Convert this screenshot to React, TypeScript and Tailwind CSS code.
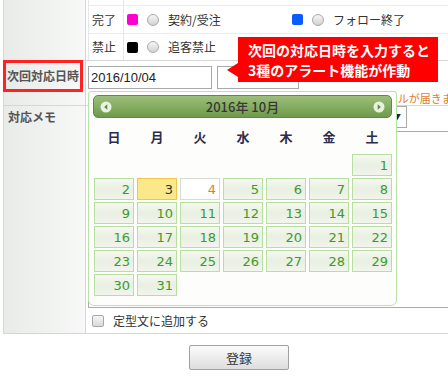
import React from "react";

const jp = { fontFamily: '"Noto Sans CJK JP", "Noto Sans", sans-serif' };
const days = ["日", "月", "火", "水", "木", "金", "土"];

type Cell = number | null;
const cells: Cell[] = [null, null, null, null, null, null, ...Array.from({ length: 31 }, (_, i) => i + 1)];

function Radio() {
  return (
    <span className="inline-block w-[12px] h-[12px] rounded-full border border-[#a9a9a9] bg-gradient-to-b from-[#f6f6f6] to-[#d2d2d2]" />
  );
}

function Status({ color, label, width }: { color: string; label: string; width?: string }) {
  return (
    <div className={`flex items-center ${width ?? ""}`}>
      <span className={`inline-block w-[11px] h-[11px] rounded-[2px] ${color}`} />
      <span className="ml-[9px] flex items-center"><Radio /></span>
      <span className="ml-[9px] text-[12px] leading-[16px] text-[#333]">{label}</span>
    </div>
  );
}

function DayCell({ n }: { n: Cell }) {
  if (n === null) return <div className="h-[22px]" />;
  let cls = "border-[#b7df9f] bg-gradient-to-b from-[#f5f8f1] via-[#e9efe2] to-[#f1f5ec] text-[#3f9a2a]";
  if (n === 3) cls = "border-[#f0c64a] bg-[#fbe88a] text-[#333]";
  if (n === 4) cls = "border-[#d6dcd2] bg-white text-[#ec7a1c]";
  return (
    <div
      className={`h-[22px] border flex items-center justify-end pr-[3px] text-[13px] leading-none ${cls}`}
      style={{ fontFamily: '"DejaVu Sans", Verdana, sans-serif' }}
    >
      {n}
    </div>
  );
}

function Arrow({ dir }: { dir: "l" | "r" }) {
  return (
    <svg width="12" height="12" viewBox="0 0 12 12">
      <circle cx="6" cy="6" r="5.5" fill="#e9f1e2" />
      {dir === "l" ? (
        <path d="M7.3 3.3 L4.2 6 L7.3 8.7 Z" fill="#5f8c3c" />
      ) : (
        <path d="M4.7 3.3 L7.8 6 L4.7 8.7 Z" fill="#5f8c3c" />
      )}
    </svg>
  );
}

function Calendar() {
  return (
    <div className="absolute left-[88px] top-[91px] w-[309px] h-[215px] border border-[#b9e2a6] rounded-t-[3px] rounded-b-[6px] bg-[#fdfefc] px-[4px] pt-[3px]">
      <div className="h-[23px] rounded-[5px] border border-[#5d8c3a] bg-gradient-to-b from-[#9bbf7b] via-[#86ad62] to-[#6f9a4a] flex items-center justify-between px-[6px]">
        <Arrow dir="l" />
        <span className="text-[13px] font-medium leading-none text-[#383838]" style={jp}>2016年 10月</span>
        <Arrow dir="r" />
      </div>
      <div className="pl-[1px] grid grid-cols-[repeat(7,40px)] gap-x-[3px] h-[36px] items-center">
        {days.map((d) => (
          <div key={d} className="text-center text-[13px] font-bold text-[#2e2c4e] leading-none" style={jp}>{d}</div>
        ))}
      </div>
      <div className="pl-[1px] grid grid-cols-[repeat(7,40px)] gap-x-[3px] gap-y-[2px]">
        {cells.map((n, i) => (
          <DayCell key={i} n={n} />
        ))}
      </div>
    </div>
  );
}

function Callout() {
  return (
    <div className="absolute left-[238px] top-[37px] w-[200px] h-[45px] bg-[#ff0000] pl-[10px] pt-[3px] text-white font-bold text-[14px] leading-[20px]" style={jp}>
      <span className="absolute left-[-11px] top-[26px] w-0 h-0 border-y-[7px] border-y-transparent border-r-[11px] border-r-[#ff0000]" />
      <div>次回の対応日時を入力すると</div>
      <div>3種のアラート機能が作動</div>
    </div>
  );
}

export default function App() {
  return (
    <div className="relative w-[448px] h-[378px] overflow-hidden bg-white" style={jp}>
      <div className="ml-[3px] w-[540px] border-l border-b border-[#d6d6d6]">
        {/* status row */}
        <div className="flex h-[61px] border-b border-[#d6d6d6]">
          <div className="w-[82px] shrink-0 bg-gradient-to-r from-[#e8ebe8] to-[#f7f8f7] border-r border-[#d6d6d6]" />
          <div className="flex-1 pl-[2px]">
            <div className="h-full border-l border-[#e6e6e6] flex flex-col">
              <div className="h-[5px] flex">
                <div className="w-[35px] border-r border-[#e6e6e6]" />
              </div>
              <div className="h-[28px] flex border-t border-[#ececec]">
                <div className="w-[35px] border-r border-[#e6e6e6] pl-[3px] flex items-center text-[12px] text-[#333]">完了</div>
                <div className="flex items-center pl-[3px]">
                  <Status color="bg-[#ff00cc]" label="契約/受注" width="w-[165px]" />
                  <Status color="bg-[#0a5cff]" label="フォロー終了" />
                </div>
              </div>
              <div className="flex-1 flex border-t border-[#ececec]">
                <div className="w-[35px] border-r border-[#e6e6e6] pl-[3px] flex items-center text-[12px] text-[#333]">禁止</div>
                <div className="flex items-center pl-[3px]">
                  <Status color="bg-black" label="追客禁止" />
                </div>
              </div>
            </div>
          </div>
        </div>

        {/* next date row */}
        <div className="flex h-[45px] border-b border-[#d6d6d6]">
          <div className="relative w-[82px] shrink-0 bg-gradient-to-r from-[#e8ebe8] to-[#f7f8f7] border-r border-[#d6d6d6]">
            <div className="absolute left-[-1px] top-[-1px] w-[80px] h-[32px] border-[3px] border-[#ff2222] flex items-center justify-center text-[12px] font-bold text-[#555]">
              次回対応日時
            </div>
          </div>
          <div className="flex-1 pl-[2px] pt-[5px]">
            <div className="flex gap-[5px]">
              <div className="w-[124px] h-[23px] border border-[#a9a9a9] flex items-center pl-[2px] text-[13px] text-[#222]" style={{ fontFamily: '"Liberation Sans", Arial, sans-serif' }}>
                2016/10/04
              </div>
              <div className="w-[82px] h-[23px] border border-[#a9a9a9]" />
            </div>
            <div className="mt-[2px] pl-[244px] whitespace-nowrap text-[11px] leading-[14px] text-[#e07a2e]">お知らせメールが届きます</div>
          </div>
        </div>

        {/* memo row */}
        <div className="flex h-[227px]">
          <div className="w-[82px] shrink-0 bg-gradient-to-r from-[#e8ebe8] to-[#f7f8f7] border-r border-[#d6d6d6] pl-[4px] pt-[3px] text-[12px] leading-[16px] font-bold text-[#555]">
            対応メモ
          </div>
          <div className="flex-1 pl-[2px]">
            <div className="ml-[212px] w-[107px] h-[22px] border border-[#a9a9a9] flex items-center justify-end pr-[5px] text-[8px] text-[#222]">▼</div>
            <div className="mt-[3px] h-[177px] border border-[#aaaaaa]" />
            <label className="flex items-center h-[25px] pl-[4px] gap-[9px] text-[12px] text-[#333]">
              <span className="inline-block w-[12px] h-[12px] rounded-[2px] border border-[#a9a9a9] bg-gradient-to-b from-[#f6f6f6] to-[#d8d8d8]" />
              定型文に追加する
            </label>
          </div>
        </div>
      </div>

      <div className="pl-[189px] pt-[10px]">
        <button className="w-[100px] h-[25px] rounded-[2px] border border-[#a0a0a0] bg-gradient-to-b from-[#fbfbfb] to-[#dedede] text-[13px] text-[#333] leading-none">
          登録
        </button>
      </div>

      <Calendar />
      <Callout />
    </div>
  );
}
